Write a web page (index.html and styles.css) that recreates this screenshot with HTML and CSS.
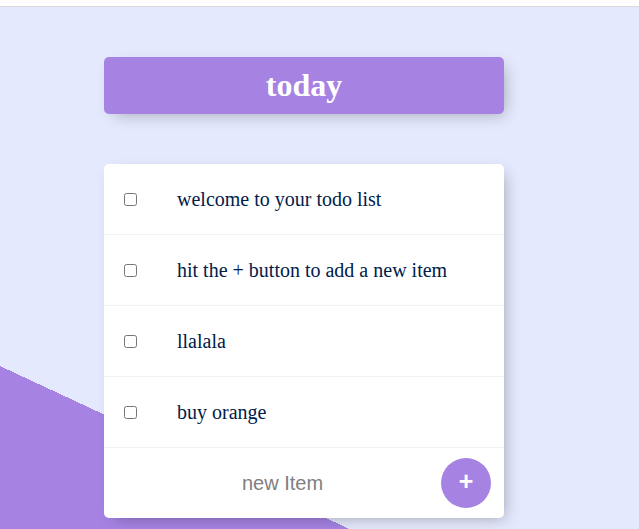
FILE: index.html
```html
<!DOCTYPE html>
<html lang="en">
<head>
<meta charset="utf-8">
<title>today</title>
<link rel="stylesheet" href="styles.css">
</head>
<body>
<div class="topbar"></div>
<main class="page">
  <div class="box heading">
    <h1 class="title">today</h1>
  </div>
  <div class="box list">
    <div class="item">
      <input class="check" type="checkbox">
      <p class="text">welcome to your todo list</p>
    </div>
    <div class="item">
      <input class="check" type="checkbox">
      <p class="text">hit the + button to add a new item</p>
    </div>
    <div class="item">
      <input class="check" type="checkbox">
      <p class="text">llalala</p>
    </div>
    <div class="item">
      <input class="check" type="checkbox">
      <p class="text">buy orange</p>
    </div>
    <form class="item add-form" onsubmit="return false">
      <input class="new-item" type="text" placeholder="new Item" autocomplete="off"><button class="add-btn" type="submit">+</button>
    </form>
  </div>
</main>
</body>
</html>
```

FILE: styles.css
```css
html, body {
  margin: 0;
  padding: 0;
}

body {
  overflow: hidden;
  font-family: "Liberation Serif", "Times New Roman", serif;
  background: #E4E9FD;
}

.topbar {
  height: 6px;
  background: #ffffff;
  border-bottom: 1px solid #dadada;
}

.page {
  height: 522px;
  padding-top: 50px;
  box-sizing: border-box;
  background-color: #E4E9FD;
  background-image: linear-gradient(25deg, #A683E3 50%, #E4E9FD 50%);
  background-size: 639px 1016px;
  background-repeat: no-repeat;
  display: flex;
  flex-direction: column;
  gap: 50px;
}

.box {
  width: 400px;
  margin-left: 104px;
  background: #ffffff;
  border-radius: 5px;
  box-shadow: 5px 5px 15px -5px rgba(0, 0, 0, 0.3);
}

.heading {
  background-color: #A683E3;
  text-align: center;
}

.title {
  margin: 0;
  padding: 10px;
  color: #ffffff;
  font-size: 32px;
  font-weight: bold;
}

.item {
  min-height: 70px;
  display: flex;
  align-items: center;
  border-bottom: 1px solid #F1F1F1;
}

.item:last-child {
  border-bottom: 0;
}

.check {
  margin: 20px;
}

.text {
  margin: 0;
  padding: 20px;
  font-size: 20px;
  font-weight: normal;
  color: #00204a;
}

.add-form {
  margin-left: 20px;
  text-align: center;
}

.new-item {
  text-align: center;
  height: 60px;
  width: 313px;
  padding: 1px 2px;
  border: none;
  background: transparent;
  font-family: "Liberation Sans", Arial, sans-serif;
  font-size: 20px;
  color: #000;
}

.new-item::placeholder {
  color: grey;
  opacity: 1;
}

.new-item:focus {
  outline: none;
}

.add-btn {
  box-sizing: border-box;
  min-height: 50px;
  width: 50px;
  border-radius: 50%;
  border: 0;
  background-color: #A683E3;
  color: #ffffff;
  font-family: "Liberation Sans", Arial, sans-serif;
  font-size: 25px;
  font-weight: bold;
  line-height: 1;
  padding: 0 0 4px;
}
```
